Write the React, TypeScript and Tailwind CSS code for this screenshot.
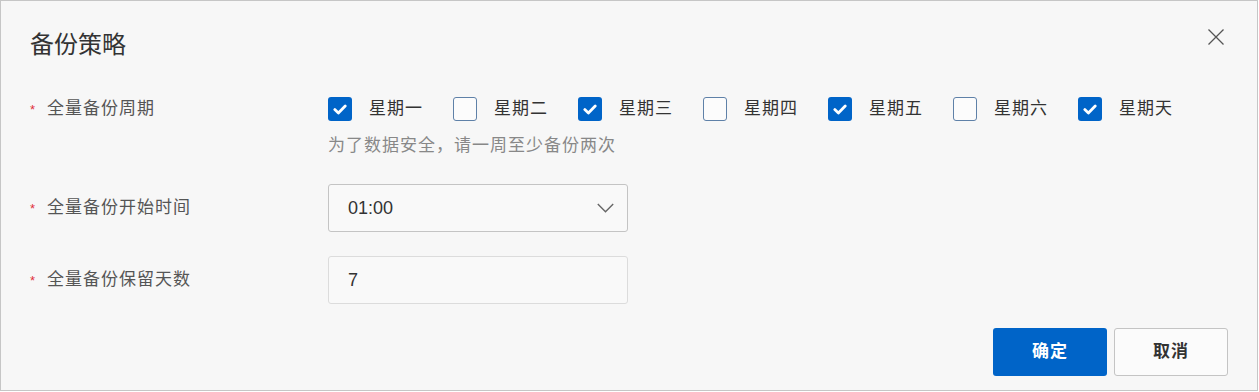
import React from "react";

const FONT = '"Liberation Sans", "Noto Sans CJK SC", sans-serif';

const days: { label: string; checked: boolean }[] = [
  { label: "星期一", checked: true },
  { label: "星期二", checked: false },
  { label: "星期三", checked: true },
  { label: "星期四", checked: false },
  { label: "星期五", checked: true },
  { label: "星期六", checked: false },
  { label: "星期天", checked: true },
];

function Box({ checked }: { checked: boolean }) {
  if (checked) {
    return (
      <span className="flex h-[24px] w-[24px] shrink-0 items-center justify-center rounded-[3px] bg-[#0064c8]">
        <svg width="14" height="11" viewBox="0 0 14 11" fill="none">
          <path d="M1.8 5.6 L5.4 9 L12.2 2" stroke="#fff" strokeWidth="2.8" strokeLinecap="round" strokeLinejoin="round" />
        </svg>
      </span>
    );
  }
  return <span className="h-[24px] w-[24px] shrink-0 rounded-[3px] border border-[#5f81a8] bg-[#fcfcfc]" />;
}

function Label({ text }: { text: string }) {
  return (
    <div className="flex h-[24px] w-[298px] shrink-0 items-start">
      <span className="mt-[6px] w-[17px] text-[13px] leading-[13px] text-[#e0303a]">*</span>
      <span className="text-[17px] leading-[24px] tracking-[1px] text-[#555]">{text}</span>
    </div>
  );
}

export default function App() {
  return (
    <div className="bg-white" style={{ fontFamily: FONT }}>
      <div className="relative flex h-[391px] w-[1258px] flex-col border border-[#c6c6c6] bg-[#f7f7f7] px-[29px] pt-[28px]">
        <div className="text-[24px] leading-[32px] text-[#333]">备份策略</div>
        <button className="absolute right-[32px] top-[27px] text-[#555]">
          <svg width="18" height="18" viewBox="0 0 18 18" fill="none">
            <path d="M1.5 1.5 L16.5 16.5 M16.5 1.5 L1.5 16.5" stroke="#555" strokeWidth="1.3" />
          </svg>
        </button>

        {/* Row 1 */}
        <div className="mt-[36px] flex">
          <Label text="全量备份周期" />
          <div className="flex flex-col">
            <div className="flex">
              {days.map((d) => (
                <div key={d.label} className="flex w-[125px] items-center">
                  <Box checked={d.checked} />
                  <span className="ml-[17px] text-[17px] leading-[24px] tracking-[1px] text-[#333]">{d.label}</span>
                </div>
              ))}
            </div>
            <div className="mt-[13px] text-[17px] leading-[24px] tracking-[1px] text-[#888]">
              为了数据安全，请一周至少备份两次
            </div>
          </div>
        </div>

        {/* Row 2 */}
        <div className="mt-[26px] flex items-center">
          <Label text="全量备份开始时间" />
          <div className="flex h-[48px] w-[300px] items-center justify-between rounded-[3px] border border-[#c4c4c4] bg-[#f9f9f9] pl-[19px] pr-[13px]">
            <span className="text-[18px] text-[#333]">01:00</span>
            <svg width="17" height="10" viewBox="0 0 17 10" fill="none">
              <path d="M0.8 1 L8.5 8.7 L16.2 1" stroke="#666" strokeWidth="1.4" />
            </svg>
          </div>
        </div>

        {/* Row 3 */}
        <div className="mt-[24px] flex items-center">
          <Label text="全量备份保留天数" />
          <div className="flex h-[48px] w-[300px] items-center rounded-[3px] border border-[#dcdcdc] bg-[#f9f9f9] pl-[19px]">
            <span className="text-[18px] text-[#333]">7</span>
          </div>
        </div>

        {/* Buttons */}
        <div className="mt-[24px] flex justify-end gap-[7px]">
          <button className="h-[48px] w-[114px] rounded-[3px] bg-[#0064c8] text-[17px] font-bold tracking-[1px] text-white">
            确定
          </button>
          <button className="h-[48px] w-[114px] rounded-[3px] border border-[#c4c4c4] bg-[#fbfbfb] text-[17px] font-bold tracking-[1px] text-[#333]">
            取消
          </button>
        </div>
      </div>
    </div>
  );
}
